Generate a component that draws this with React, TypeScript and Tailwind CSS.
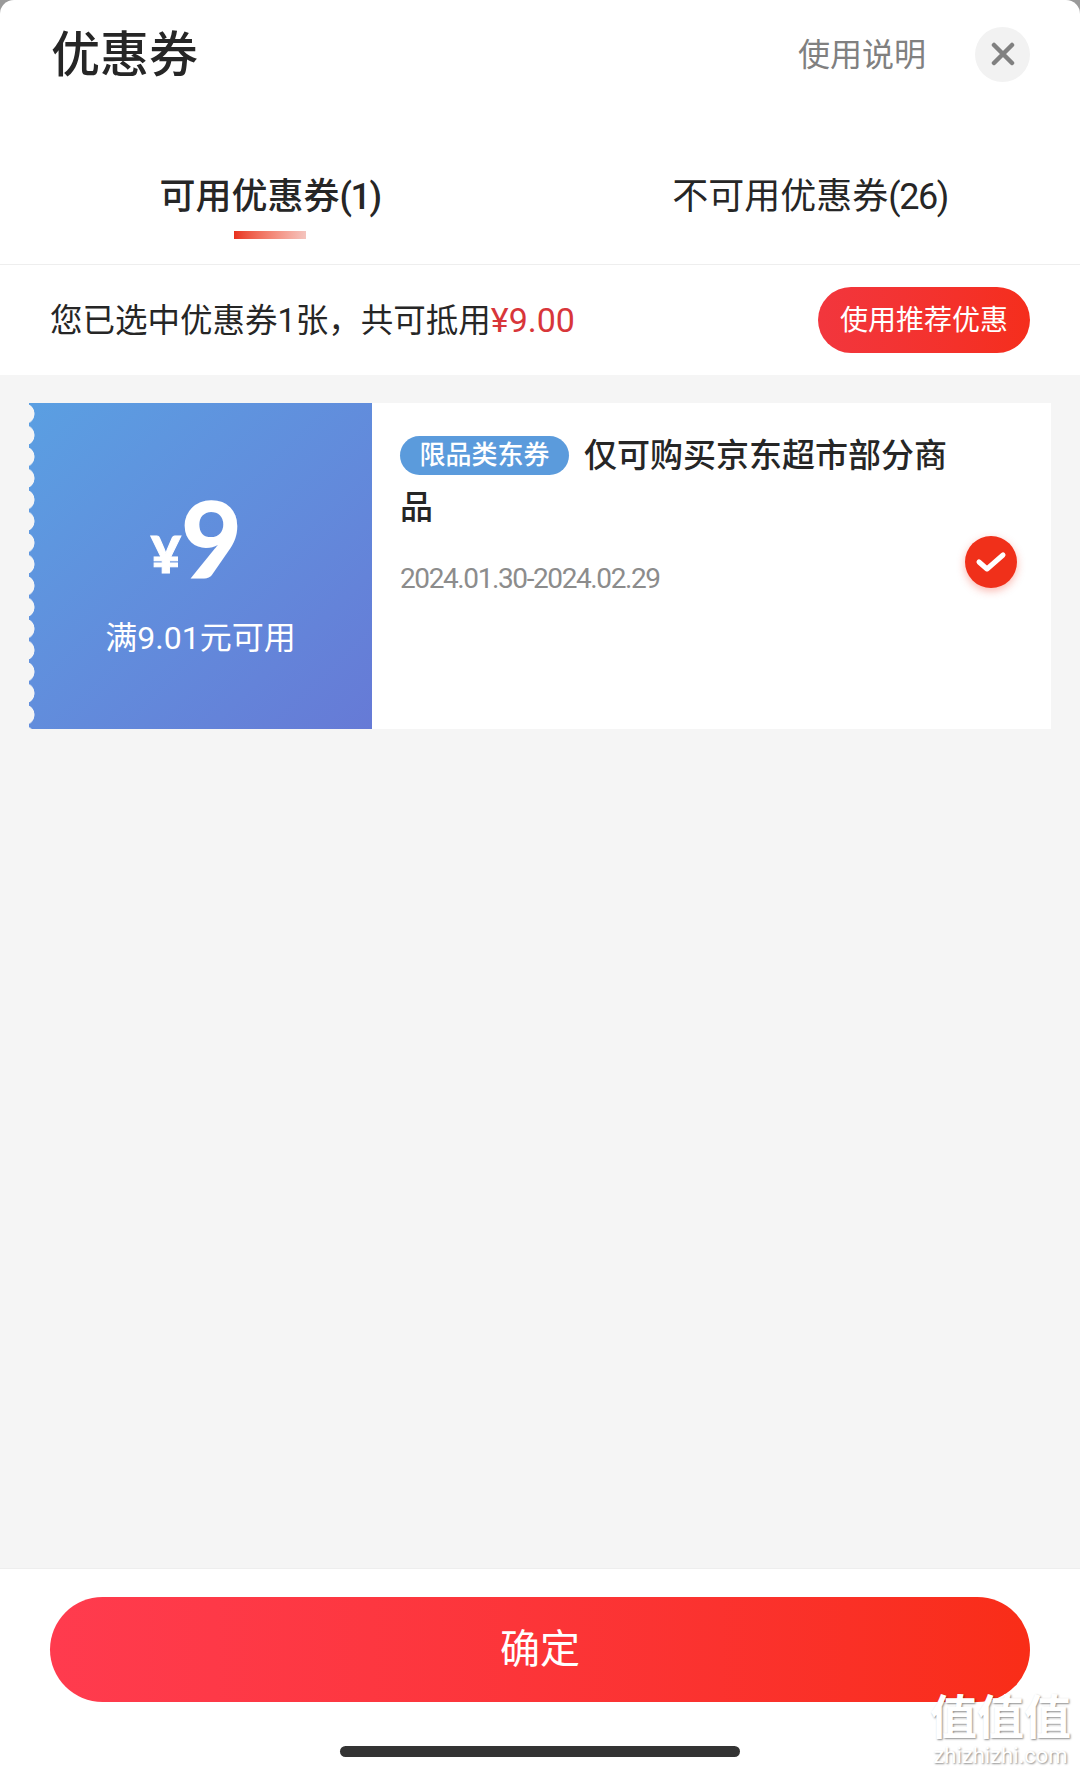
import React from "react";

export default function App() {
  return (
    <div className="relative h-[1776px] w-[1080px] overflow-hidden bg-[#9a9a9a] font-['Roboto','Noto_Sans_CJK_SC',sans-serif]">
      <div className="flex h-full flex-col overflow-hidden rounded-t-[14px] bg-white">
        {/* Header */}
        <div className="flex h-[108px] shrink-0 items-center pl-[51px] pr-[50px]">
          <h1 className="pt-[3px] text-[49px] leading-[56px] font-medium text-[#262626]">优惠券</h1>
          <span className="ml-auto pt-[2px] text-[32px] leading-[40px] text-[#808080]">使用说明</span>
          <button className="ml-[49px] flex h-[55px] w-[55px] items-center justify-center rounded-full bg-[#f2f2f2]">
            <svg width="24" height="24" viewBox="0 0 24 24" fill="none" stroke="#808080" strokeWidth="4.5" strokeLinecap="round">
              <path d="M3 3 21 21M21 3 3 21" />
            </svg>
          </button>
        </div>

        {/* Tabs */}
        <div className="grid h-[157px] shrink-0 grid-cols-2 border-b border-[#eeeeee]">
          <div className="flex flex-col items-center pt-[66px]">
            <span className="text-[36px] leading-[46px] font-medium text-[#262626]">
              可用优惠券<span className="tracking-[-1.5px]">(1)</span>
            </span>
            <span className="mt-[11px] h-[8px] w-[72px] bg-gradient-to-r from-[#e8301c] to-[#f4c4be]" />
          </div>
          <div className="flex flex-col items-center pt-[66px]">
            <span className="text-[36px] leading-[46px] text-[#262626]">
              不可用优惠券<span className="tracking-[-1.5px]">(26)</span>
            </span>
          </div>
        </div>

        {/* Summary */}
        <div className="flex h-[110px] shrink-0 items-center justify-between pl-[50px] pr-[50px]">
          <p className="text-[32.5px] leading-[40px] text-[#262626]">
            您已选中优惠券1张，共可抵用<span className="text-[34px] text-[#d8363a]">¥9.00</span>
          </p>
          <button className="h-[66px] w-[212px] rounded-full bg-gradient-to-r from-[#f2363d] to-[#f52e1c] pt-[1px] text-[28px] leading-[66px] text-white">
            使用推荐优惠
          </button>
        </div>

        {/* List */}
        <div className="min-h-0 flex-1 bg-[#f5f5f5] px-[29px] pt-[28px]">
          <div className="flex h-[326px] bg-white">
            <div className="relative flex w-[343px] shrink-0 flex-col items-center bg-gradient-to-br from-[#5a9fe2] to-[#667ad6] text-white">
              <div className="absolute top-0 bottom-0 left-0 w-[6px] bg-[radial-gradient(circle_at_-5px_50%,#f5f5f5_10.2px,transparent_10.8px)] bg-[length:6px_21.5px] bg-repeat-y" />
              <div className="mt-[81px] mr-[8px] flex h-[108px] items-end">
                <span className="mb-[14px] text-[52px] leading-[50px] font-black font-['Lato'] [-webkit-text-stroke:1px_white]">¥</span>
                <span className="text-[106px] leading-[108px] font-black font-['Lato']">9</span>
              </div>
              <span className="mt-[26px] text-[32px] leading-[40px]">满9.01元可用</span>
            </div>
            <div className="relative min-w-0 flex-1 pt-[27px] pl-[28px]">
              <div className="w-[570px] text-[33px] leading-[52px] font-medium text-[#262626]">
                <span className="mr-[15px] inline-flex h-[39px] w-[169px] items-center justify-center rounded-full bg-[#5b9bdc] align-[3px] text-[26px] leading-[39px] text-white">
                  限品类东券
                </span>
                仅可购买京东超市部分商品
              </div>
              <div className="mt-[27px] text-[28px] leading-[36px] tracking-[-1.4px] text-[#8c8c8c]">2024.01.30-2024.02.29</div>
              <div className="absolute top-[133px] right-[34px] flex h-[52px] w-[52px] items-center justify-center rounded-full bg-[#f0301a] shadow-[0_3px_8px_rgba(240,48,26,0.35)]">
                <svg width="32" height="24" viewBox="0 0 32 24" fill="none" stroke="#fff" strokeWidth="5" strokeLinecap="round" strokeLinejoin="round">
                  <path d="M4 12 12 19 28 5" />
                </svg>
              </div>
            </div>
          </div>
        </div>

        {/* Footer */}
        <div className="flex h-[208px] shrink-0 flex-col items-center border-t border-[#eeeeee] bg-white">
          <button className="mt-[28px] h-[105px] w-[980px] rounded-full bg-gradient-to-r from-[#ff3b4e] to-[#f92d17] text-[40px] leading-[105px] text-white">
            确定
          </button>
          <span className="mt-[44px] h-[11px] w-[400px] rounded-full bg-[#333333]" />
        </div>
      </div>

      {/* Watermark */}
      <div className="absolute right-[9px] bottom-[8px] flex flex-col items-center text-white [text-shadow:1px_1px_2px_rgba(0,0,0,0.45)]">
        <span className="text-[47px] leading-[52px] font-bold">值值值</span>
        <span className="text-[22px] leading-[24px]">zhizhizhi.com</span>
      </div>
    </div>
  );
}
